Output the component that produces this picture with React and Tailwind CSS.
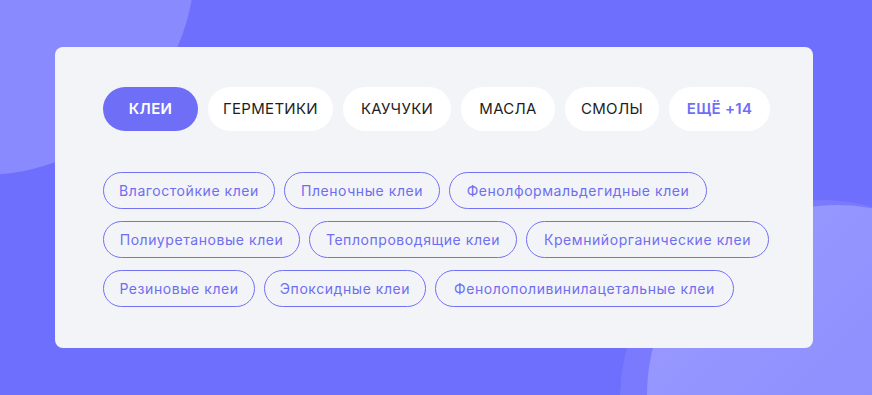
import React from 'react'

const cats = [
  { name: 'КЛЕИ', w: 'w-[95px]', active: true },
  { name: 'ГЕРМЕТИКИ', w: 'w-[125px]' },
  { name: 'КАУЧУКИ', w: 'w-[108px]' },
  { name: 'МАСЛА', w: 'w-[94px]' },
  { name: 'СМОЛЫ', w: 'w-[94px]' },
  { name: 'ЕЩЁ +14', w: 'w-[101px]', more: true },
]

const tags = [
  { name: 'Влагостойкие клеи', w: 'w-[172px]' },
  { name: 'Пленочные клеи', w: 'w-[156px]' },
  { name: 'Фенолформальдегидные клеи', w: 'w-[258px]' },
  { name: 'Полиуретановые клеи', w: 'w-[197px]' },
  { name: 'Теплопроводящие клеи', w: 'w-[208px]' },
  { name: 'Кремнийорганические клеи', w: 'w-[243px]' },
  { name: 'Резиновые клеи', w: 'w-[152px]' },
  { name: 'Эпоксидные клеи', w: 'w-[162px]' },
  { name: 'Фенолополивинилацетальные клеи', w: 'w-[299px]' },
]

export default function App() {
  return (
    <main className="relative w-[872px] h-[395px] overflow-hidden bg-[#6f6ffe] font-['Inter',sans-serif]">
      {/* decorative circles behind the card */}
      <div className="absolute -left-[230px] -top-[250px] w-[425px] h-[425px] rounded-full bg-[#8a8aff]" />
      <div className="absolute left-[620px] top-[200px] w-[400px] h-[400px] rounded-full bg-[#7a7aff]" />
      <div className="absolute left-[647px] top-[205px] w-[380px] h-[380px] rounded-full bg-gradient-to-br from-[#9b9bff] to-[#8585fd]" />

      <div className="relative h-full flex items-center justify-center pr-[4px]">
        <div className="w-[758px] h-[301px] rounded-lg bg-[#f3f4f8] pt-[40px] pl-[48px] pr-[40px] flex flex-col gap-[41px]">
          {/* categories */}
          <div className="flex gap-[10px]">
            {cats.map((c) => (
              <div
                key={c.name}
                className={`${c.w} shrink-0 h-[44px] rounded-full flex items-center justify-center text-[15px] tracking-[0.02em] ${
                  c.active
                    ? 'bg-[#6e6ef6] text-white font-semibold'
                    : c.more
                    ? 'bg-white text-[#6e6ef6] font-semibold'
                    : 'bg-white text-[#1d1d24]'
                }`}
              >
                {c.name}
              </div>
            ))}
          </div>

          {/* sub tags */}
          <div className="w-[668px] flex flex-wrap gap-x-[9px] gap-y-[12px]">
            {tags.map((t) => (
              <div
                key={t.name}
                className={`${t.w} shrink-0 h-[37px] rounded-full border border-[#7171f6] flex items-center justify-center text-[14px] tracking-[0.04em] text-[#6e6ef0]`}
              >
                {t.name}
              </div>
            ))}
          </div>
        </div>
      </div>
    </main>
  )
}
